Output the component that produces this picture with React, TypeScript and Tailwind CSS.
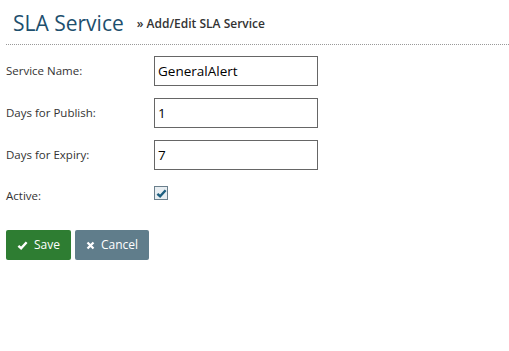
const font = { fontFamily: '"Open Sans", "Noto Sans", sans-serif' };

function Field({ label, value }: { label: string; value: string }) {
  return (
    <div className="flex items-center h-[30px] mb-[12px]">
      <label className="w-[148px] text-[11.5px] text-[#333]">{label}</label>
      <input
        readOnly
        value={value}
        className="w-[164px] h-[30px] border border-[#666] px-[3px] text-[13.5px] text-black outline-none"
        style={font}
      />
    </div>
  );
}

export default function App() {
  return (
    <div className="w-[509px] h-[351px] bg-white" style={font}>
      <div className="flex items-end pl-[13px] pt-[5px] h-[38px]">
        <h1 className="text-[21px] leading-[30px] text-[#1d4f6e]">SLA Service</h1>
        <span className="ml-[13px] mb-[5px] text-[12px] font-semibold text-[#333]">» Add/Edit SLA Service</span>
      </div>
      <div className="ml-[6px] mt-[6px] border-t border-dotted border-[#999]" />
      <div className="pl-[6px] pt-[11px]">
        <Field label="Service Name:" value="GeneralAlert" />
        <Field label="Days for Publish:" value="1" />
        <Field label="Days for Expiry:" value="7" />
        <div className="flex items-center h-[22px]">
          <label className="w-[148px] text-[11.5px] text-[#333] pt-[6px]">Active:</label>
          <span className="w-[14px] h-[14px] border border-[#6b7f8c] bg-[#e8eef2] flex items-center justify-center">
            <svg viewBox="0 0 12 12" className="w-[11px] h-[11px]">
              <path d="M1.5 6.3 L4.5 9 L10.5 2.5" fill="none" stroke="#1d5f80" strokeWidth="2.6" />
            </svg>
          </span>
        </div>
        <div className="flex gap-[4px] mt-[26px]">
          <button className="flex items-center gap-[6px] h-[30px] px-[11px] bg-[#2e7d32] text-white text-[12px] rounded-[2px]">
            <svg viewBox="0 0 12 12" className="w-[11px] h-[11px]">
              <path d="M1.5 6.3 L4.5 9 L10.5 2.5" fill="none" stroke="white" strokeWidth="2.6" />
            </svg>
            Save
          </button>
          <button className="flex items-center gap-[6px] h-[30px] px-[11px] bg-[#607d8b] text-white text-[12px] rounded-[2px]">
            <svg viewBox="0 0 12 12" className="w-[9px] h-[9px]">
              <path d="M2 2 L10 10 M10 2 L2 10" fill="none" stroke="white" strokeWidth="3" />
            </svg>
            Cancel
          </button>
        </div>
      </div>
    </div>
  );
}
